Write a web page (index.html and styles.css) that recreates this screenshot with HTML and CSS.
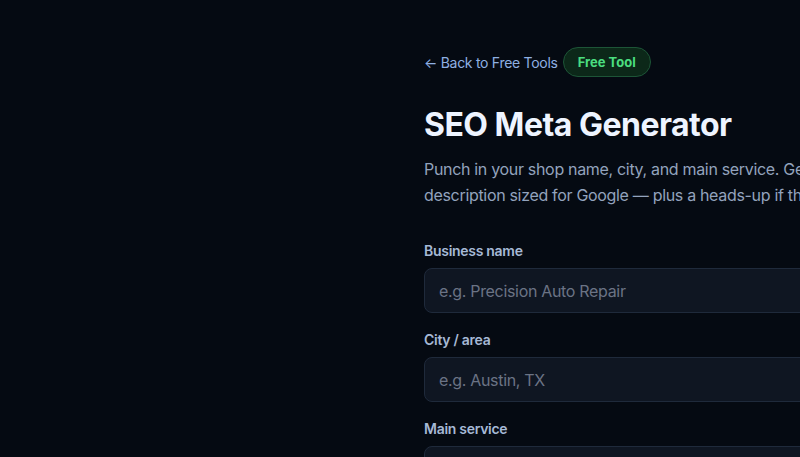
FILE: index.html
```html
<!DOCTYPE html>
<html>

<head>
    <meta charset="UTF-8">
    <link rel="stylesheet" href="styles.css">
</head>

<body>
    <div class="page">
        <div class="container">
            <div class="top-row">
                <a class="back-link" href="#">&larr; Back to Free Tools</a>
                <span class="badge">Free Tool</span>
            </div>

            <h1>SEO Meta Generator</h1>
            <p class="intro">Punch in your shop name, city, and main service. Get a title tag and meta description sized for Google &mdash; plus a heads-up if they run too long.</p>

            <div class="field">
                <label for="business">Business name</label>
                <input type="text" id="business" placeholder="e.g. Precision Auto Repair">
            </div>
            <div class="field">
                <label for="city">City / area</label>
                <input type="text" id="city" placeholder="e.g. Austin, TX">
            </div>
            <div class="field">
                <label for="service">Main service</label>
                <input type="text" id="service" placeholder="e.g. Brake repair">
            </div>
        </div>
    </div>
</body>
</html>
```

FILE: styles.css
```css
:root {
    --background: #050a12;
    --input-bg: #0f1622;
    --border: #1f2a3b;
    --text: #eef4ff;
    --muted: #93a3bd;
    --label: #a6b9d6;
    --link: #8fb0e2;
    --green: #4ade80;
}

html, body {
    overflow: hidden;
}

body {
    font-family: Inter, 'Noto Sans', sans-serif;
    background: var(--background);
    color: var(--text);
    margin: 0;
    min-height: 100vh;
    letter-spacing: -0.018em;
}

.page {
    display: grid;
    grid-template-columns: 424px 590px;
    padding-top: 47px;
}

.container {
    grid-column: 2;
}

.top-row {
    display: flex;
    align-items: center;
    gap: 5px;
    margin-bottom: 28px;
}

.back-link {
    color: var(--link);
    text-decoration: none;
    font-size: 14px;
}

.badge {
    display: inline-flex;
    align-items: center;
    height: 30px;
    box-sizing: border-box;
    padding: 0 14px;
    border-radius: 999px;
    background: #0c2819;
    border: 1px solid #1d5537;
    color: var(--green);
    font-size: 13px;
    font-weight: 700;
    letter-spacing: 0;
}

h1 {
    margin: 0 0 11px;
    font-size: 32px;
    font-weight: 700;
    letter-spacing: -0.016em;
    line-height: 40px;
}

.intro {
    margin: 0 0 33px;
    color: var(--muted);
    font-size: 16px;
    line-height: 26px;
    letter-spacing: -0.02em;
}

.field {
    display: flex;
    flex-direction: column;
    gap: 7px;
    margin-bottom: 17px;
}

label {
    color: var(--label);
    font-size: 14px;
    font-weight: 600;
    line-height: 20px;
}

input {
    height: 45px;
    box-sizing: border-box;
    background: var(--input-bg);
    border: 1px solid var(--border);
    border-radius: 8px;
    padding: 0 14px;
    color: var(--text);
    font-family: inherit;
    font-size: 16px;
    letter-spacing: -0.02em;
}

input::placeholder {
    color: #6b7385;
}
```
